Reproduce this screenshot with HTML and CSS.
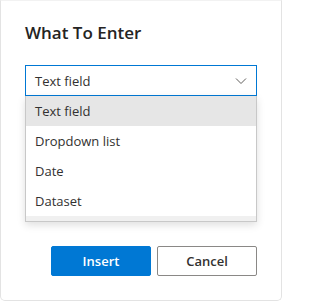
FILE: index.html
```html
<!DOCTYPE html>
<html>
<head>
<meta charset="utf-8">
<link rel="stylesheet" href="styles.css">
</head>
<body>
<div class="dialog">
  <h1 class="title">What To Enter</h1>
  <div class="select-wrap">
    <div class="select">
      <span class="select-text">Text field</span>
      <svg class="chevron" width="12" height="8" viewBox="0 0 12 8"><path d="M1 1.5 L6 6.5 L11 1.5" fill="none" stroke="#605e5c" stroke-width="1"/></svg>
    </div>
    <div class="menu">
      <div class="menu-items">
        <div class="item selected">Text field</div>
        <div class="item">Dropdown list</div>
        <div class="item">Date</div>
        <div class="item">Dataset</div>
      </div>
      <div class="menu-foot"></div>
    </div>
  </div>
  <div class="actions">
    <button class="btn primary">Insert</button>
    <button class="btn secondary">Cancel</button>
  </div>
</div>
</body>
</html>
```

FILE: styles.css
```css
* { box-sizing: border-box; }
html, body { margin: 0; padding: 0; background: #ffffff; }
body {
  font-family: "Open Sans", "Noto Sans", "Liberation Sans", sans-serif;
  color: #323130;
}
.dialog {
  width: 282px;
  height: 301px;
  background: #ffffff;
  border: 1px solid #e3e3e3;
  border-top-color: #f2f2f2;
  border-radius: 0 0 5px 5px;
  padding: 20px 24px 0 24px;
  display: flex;
  flex-direction: column;
}
.title {
  margin: 0;
  font-size: 17px;
  line-height: 24px;
  font-weight: 600;
  color: #252423;
}
.select-wrap {
  position: relative;
  margin-top: 20px;
}
.select {
  height: 31px;
  border: 1px solid #0078d4;
  display: flex;
  align-items: center;
  justify-content: space-between;
  padding: 0 9px 0 9px;
  font-size: 13px;
}
.chevron { display: block; }
.menu {
  position: absolute;
  top: 100%;
  left: 0;
  right: 0;
  background: #ffffff;
  border: 1px solid #c8c8c8;
  border-top: none;
  box-shadow: 0 3px 8px rgba(0,0,0,0.13);
  z-index: 2;
}
.item {
  height: 30px;
  display: flex;
  align-items: center;
  padding: 0 9px;
  font-size: 13px;
}
.item.selected { background: #e6e6e6; }
.menu-foot {
  height: 5px;
  background: #f0f0f0;
}
.actions {
  margin-top: 150px;
  display: flex;
  justify-content: flex-end;
  gap: 6px;
}
.btn {
  width: 100px;
  height: 30px;
  font-family: inherit;
  font-size: 13px;
  font-weight: 600;
  border-radius: 2px;
  cursor: pointer;
}
.primary {
  background: #0078d4;
  border: 1px solid #0078d4;
  color: #ffffff;
}
.secondary {
  background: #ffffff;
  border: 1px solid #8a8886;
  color: #323130;
}
```
